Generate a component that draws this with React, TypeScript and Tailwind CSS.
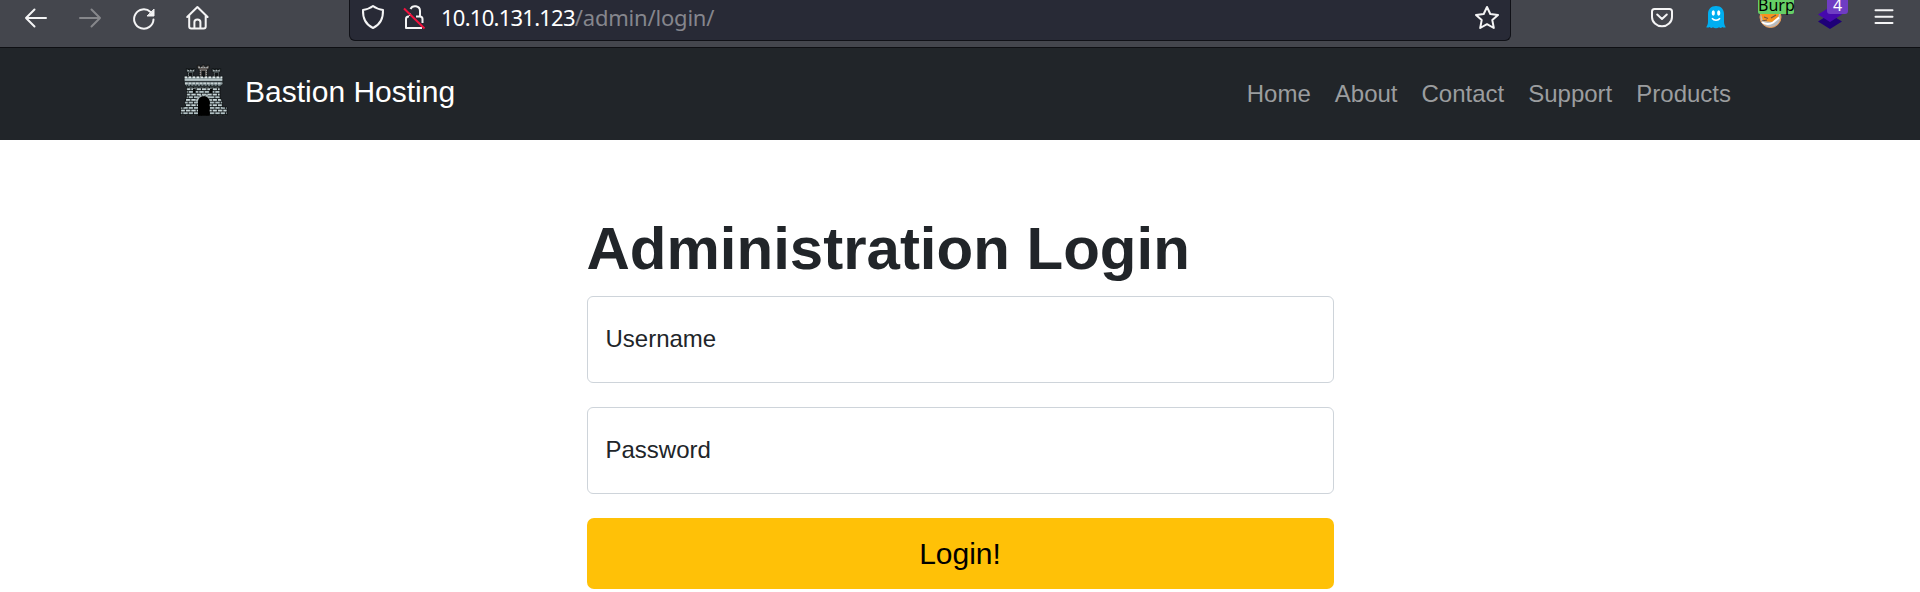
import React from "react";

const stroke = {
  fill: "none",
  stroke: "currentColor",
  strokeWidth: 2,
  strokeLinecap: "round" as const,
  strokeLinejoin: "round" as const,
};

function Tool({ children, label, className = "text-[#f4f4f5]" }: { children: React.ReactNode; label: string; className?: string }) {
  return (
    <button aria-label={label} className={`relative flex h-9 w-[54px] shrink-0 items-center justify-center ${className}`}>
      {children}
    </button>
  );
}

function Ico({ children }: { children: React.ReactNode }) {
  return (
    <svg width="28" height="28" viewBox="0 0 28 28" {...stroke}>
      {children}
    </svg>
  );
}

function Castle() {
  return (
    <svg width="68" height="68" viewBox="0 0 204 204" className="shrink-0">
      <defs>
        <pattern id="brick" width="16" height="16" patternUnits="userSpaceOnUse" y="1">
          <rect width="16" height="16" fill="#14191b" />
          <rect x="0" y="0" width="13" height="5.500" fill="#c6d4d6" />
          <rect x="-8" y="8" width="13" height="5.500" fill="#b0bfc2" />
          <rect x="8" y="8" width="13" height="5.500" fill="#b0bfc2" />
        </pattern>
      </defs>
      <g stroke="#080a0b" strokeWidth="2">
        <path d="M49 38h6v4h4v-4h6v4h4v-4h6v9l-5 3v12H54V50l-5-3z" fill="#4e585b" />
        <path d="M126 38h6v4h4v-4h6v4h4v-4h6v9l-5 3v12h-16V50l-5-3z" fill="#4e585b" />
        <path d="M82 28h8v4h6v-5h8v5h6v-4h8v9l-6 4v23H88V41l-6-4z" fill="#625d5a" />
        <path d="M50 90h100v32l7 16v15h14v25H32v-25h12v-15l6-16z" fill="url(#brick)" />
        <path d="M43 61h115v23l-8 9H50l-7-9z" fill="#77868a" />
      </g>
      <path d="M52 44h20M129 44h20M85 34h30" stroke="#b7bfc0" strokeWidth="3" strokeDasharray="5 3" />
      <path d="M56 52v8M66 52v8M133 52v8M143 52v8M91 42v20M109 42v20" stroke="#a3aaab" strokeWidth="3" strokeDasharray="3 3" />
      <path d="M57 50h10v10H57zM134 50h10v10h-10zM95 45h10v18H95z" fill="#111416" />
      <path d="M44 64h113" stroke="#dfe8e8" strokeWidth="5" strokeDasharray="7 5" />
      <path d="M44 71h113" stroke="#b4c2c4" strokeWidth="6" />
      <path d="M44 77h113M50 91h101" stroke="#20282a" strokeWidth="3" />
      <path d="M45 82h112" stroke="#c5d0d1" strokeWidth="5" strokeDasharray="8 3" />
      <path d="M50 88h101" stroke="#1d2426" strokeWidth="4" strokeDasharray="4 6" />
      <path d="M69 98h8v13h-8zM120 98h8v13h-8z" fill="#070909" />
      <path d="M81 137c1-25 40-25 41 0" fill="none" stroke="#aab7b9" strokeWidth="8" strokeDasharray="6 3" />
      <path d="M84 179v-42c0-22 35-22 35 0v42z" fill="#000" />
    </svg>
  );
}

function Field({ label }: { label: string }) {
  return (
    <div className="flex h-[87px] items-center rounded-[6px] border border-[#ced4da] px-[18px] pb-[1px] text-[24px] leading-9">
      {label}
    </div>
  );
}

export default function App() {
  return (
    <div className="h-[592px] w-[1920px] overflow-hidden bg-white font-['Liberation_Sans',sans-serif] text-[#212529]">
      <div className="flex h-12 items-start border-b border-[#0e0f13] bg-[#44464d] pl-[9px]">
        <Tool label="Back">
          <Ico><path d="M24 14H4M12.500 5.500 4 14l8.500 8.500" /></Ico>
        </Tool>
        <Tool label="Forward" className="text-[#86878b]">
          <Ico><path d="M4 14h20M15.500 5.500 24 14l-8.500 8.500" /></Ico>
        </Tool>
        <Tool label="Reload">
          <Ico>
            <path d="M23.500 15.500A9.700 9.700 0 1 1 20.500 8" />
            <path d="M24 5.500v6.500h-6.500z" fill="currentColor" strokeWidth="1" />
          </Ico>
        </Tool>
        <Tool label="Home">
          <Ico>
            <path d="M3.200 13 13.400 3 23.600 13M5.200 11.500V22.500q0 2 2 2h12.500q2 0 2-2V11.500" />
            <path d="M10.400 24v-6q0-2.500 3-2.500t3 2.500v6" />
          </Ico>
        </Tool>

        <div className="ml-[124px] flex h-[41px] w-[1162px] items-start rounded-b-[6px] border border-t-0 border-[#101117] bg-[#282a36] text-[#f4f4f5]">
          <svg width="28" height="36" viewBox="0 0 28 36" {...stroke} className="ml-[9px]">
            <path d="M14 6c2.500 2 6 3.300 10 4 .3 8-2.500 14.500-10 18C6.500 24.500 3.700 18 4 10c4-.7 7.500-2 10-4z" />
          </svg>
          <svg width="28" height="36" viewBox="0 0 28 36" {...stroke} className="ml-[14px]">
            <path d="M9.500 9c2-4.500 9.500-3.500 9.500 2V16M9 13.500v2.500M8 16.500H7.500Q5 16.500 5 19v9h16M15 16.500h4q2.500 0 2.500 2.500v4" strokeLinecap="butt" />
            <path d="M3 8.500 23.500 28.500" stroke="#f3123e" strokeLinecap="butt" />
          </svg>
          <div className="ml-[12px] flex h-[34px] items-center whitespace-nowrap font-['Noto_Sans',sans-serif] text-[22px] leading-[34px]">
            <span className="tracking-[-0.75px] text-white">10.10.131.123</span>
            <span className="tracking-[-0.2px] text-[#85868d]">/admin/login/</span>
          </div>
          <svg width="28" height="36" viewBox="0 0 28 36" {...stroke} className="ml-auto mr-[9px]">
            <path d="M14 7l3.300 7 7.700 1-5.700 5.100 1.500 7.900-6.800-3.800L7.200 28l1.500-7.900L3 15l7.700-1z" />
          </svg>
        </div>

        <div className="ml-[124px] flex">
          <Tool label="Pocket">
            <Ico>
              <path d="M6.500 5h15q2.500 0 2.500 2.500v5.500c0 5-4.500 9.300-10 9.300S4 18 4 13V7.500Q4 5 6.500 5z" />
              <path d="M9.200 10.500 14 15l4.800-4.500" />
            </Ico>
          </Tool>
          <Tool label="Ghostery">
            <svg width="28" height="28" viewBox="0 0 28 28">
              <path d="M14 2c-5.200 0-8 3.500-8 8v8c0 2-1 4-1.800 5.200 1.300.6 2.600.3 3.600-.2.800 1.200 2.100 1.300 3.100.2 1.900 1.300 4.300 1.300 6.200 0 1 1.100 2.300 1 3.100-.2 1 .5 2.300.8 3.600.2C23 22 22 20 22 18v-8c0-4.500-2.800-8-8-8z" fill="#00aef0" />
              <ellipse cx="11.300" cy="9" rx="1.600" ry="2.700" fill="#fff" />
              <ellipse cx="16.700" cy="9" rx="1.600" ry="2.700" fill="#fff" />
              <path d="M10 14.200c2 2.700 6 2.700 8 0" fill="none" stroke="#fff" strokeWidth="1.500" />
            </svg>
          </Tool>
          <Tool label="FoxyProxy">
            <svg width="28" height="28" viewBox="0 0 28 28">
              <circle cx="14.500" cy="13" r="10.500" fill="#b9bbbd" stroke="#ef9a50" />
              <path d="M5 10h18l-1.500 5.500-5.500 2.500-9-1z" fill="#f6921e" />
              <path d="M8 13l4 1.500M15 14l5-3M6 17l5-1" fill="none" stroke="#6d5547" strokeWidth="1.200" />
              <path d="M6 18c3 2.500 8 2.500 11 .5l6-5" fill="none" stroke="#fff" strokeWidth="2" />
            </svg>
            <span className="absolute left-[15px] top-0 h-[14px] w-[36px] rounded-b-[2px] bg-[#66cf66] text-center font-['Noto_Sans',sans-serif] text-[16px] leading-[11px] text-black">Burp</span>
          </Tool>
          <div className="w-[6px]" />
          <Tool label="Wappalyzer">
            <svg width="28" height="28" viewBox="0 0 28 28">
              <path d="M2 17.500 14 10l12 7.500L14 25z" fill="#1e0078" />
              <path d="M2 10.500 14 3l12 7.500L14 18z" fill="#4608ad" />
            </svg>
            <span className="absolute left-[24px] top-0 h-[14px] w-[21px] rounded-b-[3px] bg-[#6f3cc3] text-center font-['Noto_Sans',sans-serif] text-[16px] leading-[11px] text-white">4</span>
          </Tool>
          <Tool label="Menu">
            <Ico><path d="M5.500 6.200h17M5.500 12.700h17M5.500 19h17" /></Ico>
          </Tool>
        </div>
      </div>

      <nav className="flex h-[92px] items-start bg-[#212529] pl-[170px] pr-[189px] pt-[8px]">
        <Castle />
        <div className="ml-[7px] mt-[18px] text-[30px] leading-[36px] text-white">Bastion Hosting</div>
        <div className="ml-auto mt-[20px] flex gap-6 text-[24px] leading-9 text-[#9b9d9f]">
          <a>Home</a>
          <a>About</a>
          <a>Contact</a>
          <a>Support</a>
          <a>Products</a>
        </div>
      </nav>

      <main className="mx-auto flex w-[747px] flex-col pt-[73px]">
        <h1 className="mb-[11px] h-[72px] text-[60px] font-bold leading-[72px]">Administration Login</h1>
        <div className="flex flex-col gap-6">
          <Field label="Username" />
          <Field label="Password" />
          <button className="h-[71px] rounded-[7px] bg-[#ffc107] text-[30px] text-black">Login!</button>
        </div>
      </main>
    </div>
  );
}
